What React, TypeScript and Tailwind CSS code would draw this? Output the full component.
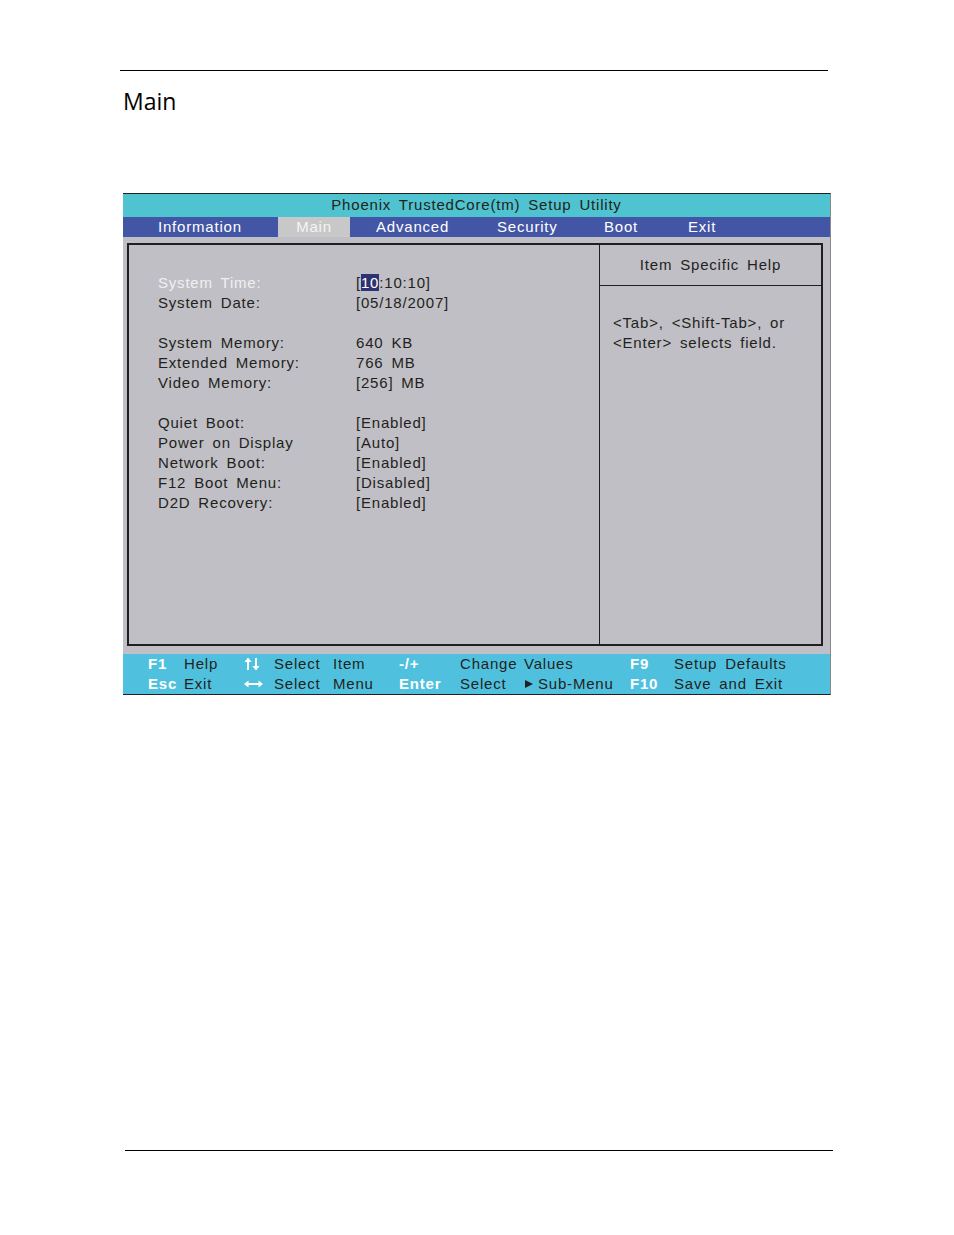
import React from 'react';

const bios = { fontFamily: '"Liberation Sans Narrow", "Liberation Sans", Arial, sans-serif' };

function UpDown() {
    return (
        <svg width="16" height="14" viewBox="0 0 16 14" className="inline-block">
            <path d="M4 13V4" stroke="white" strokeWidth="2" />
            <path d="M0.5 5L4 0.5L7.5 5Z" fill="white" />
            <path d="M12 1V10" stroke="white" strokeWidth="2" />
            <path d="M8.5 9L12 13.5L15.5 9Z" fill="white" />
        </svg>
    );
}

function LeftRight() {
    return (
        <svg width="19" height="8" viewBox="0 0 19 8" className="inline-block">
            <path d="M3 4H16" stroke="white" strokeWidth="2" />
            <path d="M0 4L4.5 0.5V7.5Z" fill="white" />
            <path d="M19 4L14.5 0.5V7.5Z" fill="white" />
        </svg>
    );
}

const rows: ([string, React.ReactNode] | null)[] = [
    ['System Time:', null],
    ['System Date:', '[05/18/2007]'],
    null,
    ['System Memory:', '640 KB'],
    ['Extended Memory:', '766 MB'],
    ['Video Memory:', '[256] MB'],
    null,
    ['Quiet Boot:', '[Enabled]'],
    ['Power on Display', '[Auto]'],
    ['Network Boot:', '[Enabled]'],
    ['F12 Boot Menu:', '[Disabled]'],
    ['D2D Recovery:', '[Enabled]'],
];

export default function App() {
    return (
        <div className="w-[954px] h-[1235px] bg-white flex flex-col">
            <div className="mt-[70px] ml-[120px] w-[708px] h-px bg-black" />
            <h1
                className="ml-[123px] mt-[14px] text-[23px] leading-[32px] text-black"
                style={{ fontFamily: '"Open Sans", "Noto Sans", sans-serif' }}
            >
                Main
            </h1>

            {/* BIOS screen */}
            <div
                className="mt-[76px] ml-[123px] w-[708px] flex flex-col border-t border-[#231f20] border-r border-r-[#8a8a8a] border-b border-b-[#231f20] text-[15px] tracking-[0.8px] whitespace-pre"
                style={bios}
            >
                <div className="h-[23px] bg-[#4fc3cf] flex items-center justify-center text-[#231f20] [word-spacing:3px]">
                    Phoenix TrustedCore(tm) Setup Utility
                </div>
                <div className="h-[20px] bg-[#4356a5] flex items-center pl-[35px] text-white">
                    <span className="w-[120px]">Information</span>
                    <span className="w-[72px] h-full bg-[#c9c8c9] text-[#f4f4f4] flex items-center justify-center">Main</span>
                    <span className="w-[26px]" />
                    <span className="w-[121px]">Advanced</span>
                    <span className="w-[107px]">Security</span>
                    <span className="w-[84px]">Boot</span>
                    <span>Exit</span>
                </div>
                <div className="bg-[#c0bfc5] pl-[4px] pr-[7px] pt-[6px] pb-[8px]">
                    <div className="h-[403px] border-2 border-[#231f20] flex text-[#231f20] [word-spacing:3px]">
                        <div className="w-[471px] border-r border-[#231f20] pl-[29px] pt-[28px]">
                            {rows.map((r, i) =>
                                r === null ? (
                                    <div key={i} className="h-[20px]" />
                                ) : (
                                    <div key={i} className="h-[20px] leading-[20px] flex">
                                        <span className={`w-[198px] ${i === 0 ? 'text-[#f0f0f2]' : ''}`}>{r[0]}</span>
                                        <span>
                                            {i === 0 ? (
                                                <>
                                                    [<span className="bg-[#2e3271] text-white">10</span>:10:10]
                                                </>
                                            ) : (
                                                r[1]
                                            )}
                                        </span>
                                    </div>
                                )
                            )}
                        </div>
                        <div className="flex-1 flex flex-col">
                            <div className="h-[41px] border-b border-[#231f20] flex items-center justify-center">
                                Item Specific Help
                            </div>
                            <div className="pl-[13px] pt-[27px] leading-[20px]">
                                <div>{'<Tab>, <Shift-Tab>, or'}</div>
                                <div>{'<Enter> selects field.'}</div>
                            </div>
                        </div>
                    </div>
                </div>
                <div className="h-[40px] bg-[#4fc1de] pl-[25px] text-[#231f20] leading-[20px] grid grid-cols-[36px_60px_30px_59px_66px_61px_64px_106px_44px_1fr] [word-spacing:3px]">
                    <span className="text-white font-bold">F1</span>
                    <span>Help</span>
                    <span className="flex items-center"><UpDown /></span>
                    <span>Select</span>
                    <span>Item</span>
                    <span className="text-white font-bold">-/+</span>
                    <span>Change</span>
                    <span>Values</span>
                    <span className="text-white font-bold">F9</span>
                    <span>Setup Defaults</span>

                    <span className="text-white font-bold">Esc</span>
                    <span>Exit</span>
                    <span className="flex items-center"><LeftRight /></span>
                    <span>Select</span>
                    <span>Menu</span>
                    <span className="text-white font-bold">Enter</span>
                    <span>Select</span>
                    <span className="flex items-center gap-[4px]">
                        <svg width="10" height="10" viewBox="0 0 10 10">
                            <path d="M1 1L9 5L1 9Z" fill="#231f20" />
                        </svg>
                        Sub-Menu
                    </span>
                    <span className="text-white font-bold">F10</span>
                    <span>Save and Exit</span>
                </div>
            </div>

            <div className="mt-[455px] ml-[125px] w-[708px] h-px bg-black" />
        </div>
    );
}
